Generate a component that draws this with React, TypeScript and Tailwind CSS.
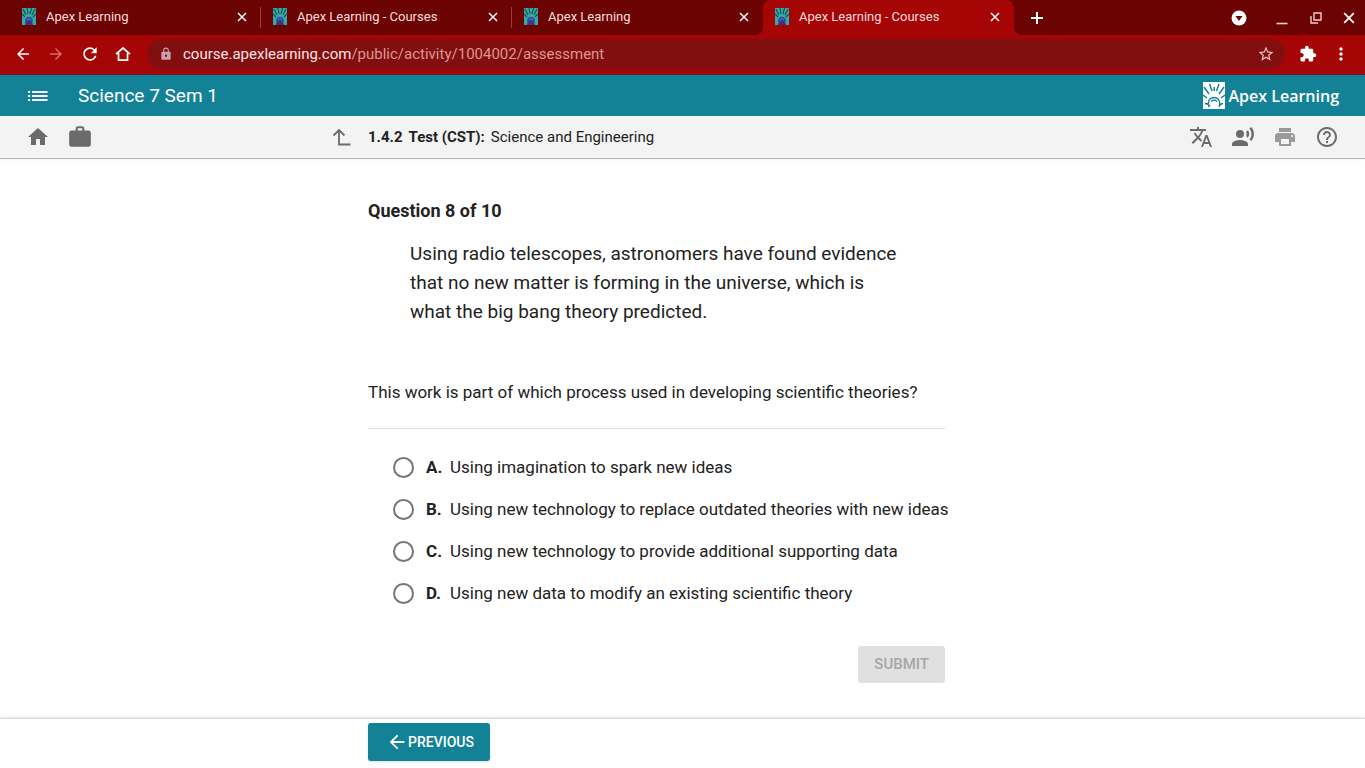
import { useState } from 'react';
import {
  MdArrowBack,
  MdArrowForward,
  MdHelpOutline,
  MdHome,
  MdLock,
  MdMoreVert,
  MdExtension,
  MdPrint,
  MdRecordVoiceOver,
  MdRefresh,
  MdStarBorder,
  MdTranslate,
  MdWork,
} from 'react-icons/md';

interface TabProps {
  title: string;
  active?: boolean;
  divider?: boolean;
}

const tabs: TabProps[] = [
  { title: 'Apex Learning', divider: true },
  { title: 'Apex Learning - Courses', divider: true },
  { title: 'Apex Learning' },
  { title: 'Apex Learning - Courses', active: true },
];

const answers = [
  { letter: 'A', text: 'Using imagination to spark new ideas' },
  { letter: 'B', text: 'Using new technology to replace outdated theories with new ideas' },
  { letter: 'C', text: 'Using new technology to provide additional supporting data' },
  { letter: 'D', text: 'Using new data to modify an existing scientific theory' },
];

function Favicon() {
  return (
    <svg viewBox="0 0 14 17" className="h-[17px] w-[14px] shrink-0" aria-hidden="true">
      <rect width="14" height="17" fill="#35a9a5" />
      <path
        d="M1 1l3 6M5 0l1 6M9.500 0L8 6M13 1l-3 6M0 6l3 3M14 6l-3 3"
        stroke="#17494f"
        strokeWidth="1.100"
        fill="none"
      />
      <circle cx="7" cy="12.500" r="3.800" fill="#3549a0" />
      <path d="M3 17c0-3 2-4 4-4s3 1 4 4z" fill="#3f3478" />
      <path d="M5 12c1-2 3-2 4 0" stroke="#5a78c8" strokeWidth="1" fill="none" />
    </svg>
  );
}

function CloseIcon({ className }: { className: string }) {
  return (
    <svg viewBox="0 0 10 10" className={className} aria-hidden="true">
      <path d="M1 1l8 8M9 1L1 9" stroke="currentColor" strokeWidth="1.500" fill="none" />
    </svg>
  );
}

function Tab({ title, active, divider }: TabProps) {
  return (
    <div
      className={`relative flex h-[35px] w-[251px] items-center px-3 pb-[2px] ${
        active ? 'rounded-t-lg bg-[#a50505]' : ''
      }`}
    >
      {active && (
        <>
          <span className="absolute bottom-0 -left-2 size-2 bg-[radial-gradient(circle_at_0_0,transparent_8px,#a50505_8px)]" />
          <span className="absolute -right-2 bottom-0 size-2 bg-[radial-gradient(circle_at_100%_0,transparent_8px,#a50505_8px)]" />
        </>
      )}
      <a href="#" className="flex flex-1 items-center gap-[10px] text-[13px] text-[#fbdcdc]">
        <Favicon />
        <span className="whitespace-nowrap">{title}</span>
      </a>
      <button aria-label="Close tab" className="flex size-[14px] items-center justify-center text-white">
        <CloseIcon className="size-[10px]" />
      </button>
      {divider && <span className="absolute top-[7px] right-0 h-[21px] w-px bg-[#a33a3a]" />}
    </div>
  );
}

function ApexLogo() {
  return (
    <a href="#" className="flex items-center gap-1 text-white">
      <svg viewBox="0 0 22 27" className="h-[27px] w-[22px]" aria-hidden="true">
        <rect width="22" height="27" fill="#fff" />
        <path
          d="M1 5l5 7M6.500 2l2.500 7M16 2l-2.500 7M21 5l-5 7M11.200 5v4M0 13l4 3M22 13l-4 3"
          stroke="#148296"
          strokeWidth="1.500"
          fill="none"
        />
        <path
          d="M6 25c-2-4 0-9.500 5-9.500s7 5.500 5 9.500M2 21.500c3 0 4 1 5 3M8 19.500c2-2 4-2 6 0M20 21.500c-2 0-3 1-4 3"
          stroke="#148296"
          strokeWidth="1.400"
          fill="none"
        />
      </svg>
      <span className="font-['Open_Sans','Noto_Sans',sans-serif] text-[16px] leading-6 font-semibold">
        Apex Learning
      </span>
    </a>
  );
}

function Browser() {
  return (
    <div className="text-white">
      <div className="flex h-[35px] items-center bg-[#6b0303] pr-[6px] pl-[10px]">
        <div className="flex">
          {tabs.map((tab, i) => (
            <Tab key={i} {...tab} />
          ))}
        </div>
        <button aria-label="New tab" className="ml-[15px] flex size-4 items-center justify-center">
          <svg viewBox="0 0 12 12" className="size-3">
            <path d="M6 0v12M0 6h12" stroke="currentColor" strokeWidth="2" />
          </svg>
        </button>
        <div className="ml-auto flex items-center">
          <button aria-label="Search tabs" className="mr-7 flex size-4 items-center justify-center">
            <svg viewBox="0 0 16 16" className="size-4">
              <circle cx="8" cy="8" r="7.500" fill="#fff" />
              <path d="M4.500 6h7L8 11z" fill="#6b0303" />
            </svg>
          </button>
          <button aria-label="Minimize" className="mr-5 flex size-[14px] items-end">
            <svg viewBox="0 0 14 14" className="size-[14px]">
              <path d="M1.500 12.500h11" stroke="#f4cccc" strokeWidth="1.600" />
            </svg>
          </button>
          <button aria-label="Restore" className="mr-5 size-[14px]">
            <svg viewBox="0 0 14 14" className="size-[14px]" fill="none" stroke="#f4cccc" strokeWidth="1.400">
              <path d="M5 2h7v7H5zM2 5v7h7" />
            </svg>
          </button>
          <button aria-label="Close window" className="mr-1 size-3">
            <CloseIcon className="size-3" />
          </button>
        </div>
      </div>

      {/* Address bar */}
      <div className="flex h-10 items-center border-b border-[#5c2233] bg-[#a50505] pr-[14px] pb-[2px] pl-[14px]">
        <div className="flex items-center gap-[15px]">
          <button aria-label="Back">
            <MdArrowBack className="size-[18px]" />
          </button>
          <button aria-label="Forward" className="text-[#d86a6a]">
            <MdArrowForward className="size-[18px]" />
          </button>
          <button aria-label="Reload">
            <MdRefresh className="size-5" />
          </button>
          <button aria-label="Home page">
            <svg viewBox="0 0 16 16" className="size-4" fill="none" stroke="#fff" strokeWidth="1.700">
              <path d="M1 8.200L8 2l7 6.200M3.500 7v7.200h9V7" />
            </svg>
          </button>
        </div>
        <div className="ml-4 flex h-[30px] flex-1 items-center rounded-full bg-[#820f0f] pr-[10px] pl-3">
          <MdLock className="size-[14px] text-[#c9a0b0]" />
          <span className="ml-[10px] flex-1 text-[15px] leading-5 text-[#fbe4e4]">
            course.apexlearning.com<span className="text-[#dd9595]">/public/activity/1004002/assessment</span>
          </span>
          <button aria-label="Bookmark this page" className="text-[#f0c0c0]">
            <MdStarBorder className="size-[18px]" />
          </button>
        </div>
        <button aria-label="Extensions" className="ml-[14px]">
          <MdExtension className="size-[18px]" />
        </button>
        <button aria-label="Menu" className="ml-[14px]">
          <MdMoreVert className="size-5" />
        </button>
      </div>
    </div>
  );
}

export default function App() {
  const [selected, setSelected] = useState('');

  return (
    <div className="flex min-h-screen flex-col bg-white font-[Roboto,sans-serif] text-[#222]">
      <Browser />

      <header className="flex h-[41px] items-center bg-[#148296] pr-[26px] pl-7 text-white">
        <button aria-label="Course menu">
          <svg viewBox="0 0 20 12" className="h-3 w-5" stroke="currentColor" strokeWidth="2">
            <path d="M0 2h2.200M4 2h15.500M0 6h2.200M4 6h15.500M0 10h2.200M4 10h15.500" />
          </svg>
        </button>
        <h1 className="ml-[30px] text-[19px] leading-6">Science 7 Sem 1</h1>
        <div className="ml-auto">
          <ApexLogo />
        </div>
      </header>

      <nav className="flex h-[43px] items-center border-b border-[#b0b3b3] bg-[#f3f3f3] pr-[26px] text-[#6b6b6b] shadow-xs">
        <div className="flex w-[368px] items-center pr-4 pl-[26px]">
          <a href="#" aria-label="Home">
            <MdHome className="size-6" />
          </a>
          <a href="#" aria-label="Portfolio" className="ml-[17px]">
            <MdWork className="size-[26px]" />
          </a>
          <a href="#" aria-label="Up one level" className="ml-auto">
            <svg viewBox="0 0 20 18" className="h-[18px] w-5" fill="none" stroke="currentColor" strokeWidth="1.800">
              <path d="M1.500 7.500L7 2l5.500 5.500M7 2v14.500h11.500" />
            </svg>
          </a>
        </div>
        <div className="flex gap-[6px] text-[15px] leading-5 text-[#222]">
          <span className="font-bold">1.4.2</span>
          <span className="font-bold">Test (CST):</span>
          <span>Science and Engineering</span>
        </div>
        <div className="ml-auto flex items-center gap-[18px]">
          <button aria-label="Translate">
            <MdTranslate className="size-6" />
          </button>
          <button aria-label="Read aloud">
            <MdRecordVoiceOver className="size-6" />
          </button>
          <button aria-label="Print" className="text-[#9a9a9a]">
            <MdPrint className="size-6" />
          </button>
          <button aria-label="Help">
            <MdHelpOutline className="size-6" />
          </button>
        </div>
      </nav>

      <main className="flex-1 pt-10 pl-[368px]">
        <form className="max-w-[577px]" onSubmit={(e) => e.preventDefault()}>
          <h2 className="text-[18px] leading-6 font-bold">Question 8 of 10</h2>
          <p className="mt-4 pr-10 pl-[42px] text-[19px] leading-[29px]">
            Using radio telescopes, astronomers have found evidence that no new matter is forming in
            the universe, which is what the big bang theory predicted.
          </p>
          <p className="mt-[54px] text-[17px] leading-6">
            This work is part of which process used in developing scientific theories?
          </p>
          <hr className="mt-6 border-[#dedede]" />

          <div className="mt-[17px]">
            {answers.map(({ letter, text }) => (
              <label key={letter} className="flex h-[42px] items-center pl-[25px] text-[17px] leading-6">
                <input
                  type="radio"
                  name="answer"
                  value={letter}
                  checked={selected === letter}
                  onChange={() => setSelected(letter)}
                  className="mr-3 size-[21px] shrink-0 appearance-none rounded-full border-2 border-[#757575] bg-white checked:border-[6px] checked:border-[#148296]"
                />
                <span className="w-6 shrink-0 font-bold">{letter}.</span>
                <span className="whitespace-nowrap">{text}</span>
              </label>
            ))}
          </div>

          <div className="mt-8 flex justify-end">
            <button
              type="submit"
              disabled={!selected}
              className="h-[37px] rounded-[3px] bg-[#148296] px-4 text-[15px] font-medium text-white disabled:bg-[#e0e0e0] disabled:text-[#a6a6a6]"
            >
              SUBMIT
            </button>
          </div>
        </form>
      </main>

      <footer className="h-[50px] border-t border-[#dadada] pt-1 pl-[368px] shadow-[0_-1px_2px_rgba(0,0,0,0.1)]">
        <button className="flex h-[38px] items-center rounded-[3px] bg-[#148296] pr-4 pl-[18px] text-[14px] font-medium text-white shadow-sm">
          <MdArrowBack className="size-[22px]" />
          PREVIOUS
        </button>
      </footer>
    </div>
  );
}
